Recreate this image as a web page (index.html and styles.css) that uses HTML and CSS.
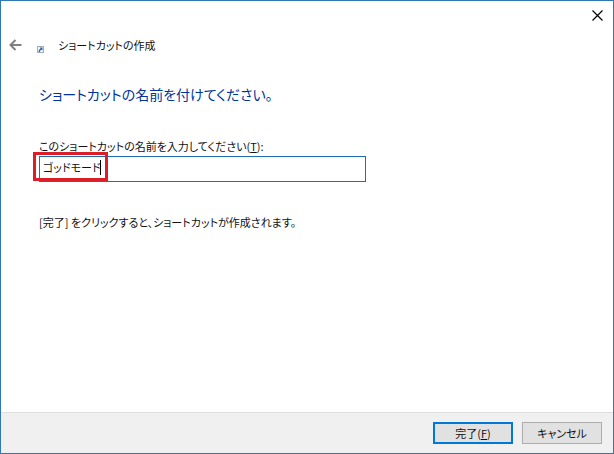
FILE: index.html
```
<!DOCTYPE html>
<html lang="ja">
<head>
    <meta charset="UTF-8">
    <meta name="viewport" content="width=device-width, initial-scale=1.0">
    <title>ショートカットの作成</title>
    <link rel="stylesheet" href="styles.css">
</head>
<body>
<form class="wizard">
    <div class="title-bar">
        <button type="button" class="close-btn" aria-label="閉じる">
            <svg width="11" height="11" viewBox="0 0 11 11"><path d="M0.5 0.5L10.5 10.5M10.5 0.5L0.5 10.5" stroke="#000" stroke-width="1.2"/></svg>
        </button>
    </div>
    <div class="header">
        <button type="button" class="back-btn" aria-label="戻る">
            <svg width="13" height="12" viewBox="0 0 13 12"><path d="M12.5 6H1.5M6.5 1L1.5 6L6.5 11" fill="none" stroke="#808080" stroke-width="2"/></svg>
        </button>
        <svg class="shortcut-icon" width="7" height="7" viewBox="0 0 7 7">
            <rect x="0.5" y="0.5" width="6" height="6" fill="#f4f8fb" stroke="#a3adb8"/>
            <path d="M2.5 1.5H5.5V4.5L4.6 3.7Q3 4.3 2.8 6H1.6Q1.2 3.8 3.5 2.6Z" fill="#2b67a8"/>
        </svg>
        <span class="title">ショートカットの作成</span>
    </div>

    <div class="content">
        <h1>ショートカットの名前を付けてください。</h1>
        <label for="shortcutName">このショートカットの名前を入力してください(<u>T</u>):</label>
        <div class="field">
            <input type="text" id="shortcutName" value="ゴッドモード">
            <span class="caret"></span>
            <span class="highlight"></span>
        </div>
        <p>[完了] をクリックすると、ショートカットが作成されます。</p>
    </div>

    <div class="footer">
        <button type="button" class="btn btn-default">完了(<u>F</u>)</button>
        <button type="button" class="btn">キャンセル</button>
    </div>
</form>
</body>
</html>
```
FILE: styles.css
```
* {
    box-sizing: border-box;
}
body {
    margin: 0;
    background-color: white;
    color: #111;
    font-family: "Noto Sans CJK JP", sans-serif;
    font-size: 11px;
    line-height: 16px;
    font-feature-settings: "palt";
}
button, input {
    font: inherit;
    font-feature-settings: inherit;
    color: inherit;
}
.wizard {
    display: flex;
    flex-direction: column;
    min-height: 100vh;
    border: 1px solid #2f78b5;
}
.title-bar {
    display: flex;
    justify-content: flex-end;
    height: 29px;
}
.close-btn, .back-btn {
    display: flex;
    align-items: center;
    padding: 0;
    border: none;
    background: none;
}
.close-btn {
    padding: 0 10px;
}
.header {
    display: flex;
    align-items: center;
    padding: 7px 8px;
}
.shortcut-icon {
    margin: 9px 14px 0 15px;
}
.content {
    flex: 1;
    padding: 22px 38px;
}
h1 {
    margin: 0 0 32px;
    color: #003399;
    font-size: 14px;
    font-weight: normal;
    line-height: 24px;
}
label {
    display: block;
    margin-bottom: 2px;
}
.field {
    position: relative;
    width: 327px;
    max-width: 100%;
}
.field input {
    display: block;
    width: 100%;
    height: 26px;
    padding: 0 3px 4px;
    border: 1px solid #1f6fae;
    outline: none;
    background: white;
}
.caret {
    position: absolute;
    top: 4px;
    left: 61px;
    width: 1px;
    height: 15px;
    background-color: black;
}
.highlight {
    position: absolute;
    top: -4px;
    left: -6px;
    width: 75px;
    height: 29px;
    border: 3px solid #dc1e28;
    pointer-events: none;
}
p {
    margin: 32px 0 0;
}
.footer {
    display: flex;
    justify-content: flex-end;
    gap: 9px;
    padding: 9px 11px;
    border-top: 1px solid #dfdfdf;
    background-color: #f0f0f0;
}
.btn {
    width: 80px;
    height: 22px;
    padding: 0;
    border: 1px solid #adadad;
    background-color: #e1e1e1;
}
.btn-default {
    border: 2px solid #0078d7;
}
```
